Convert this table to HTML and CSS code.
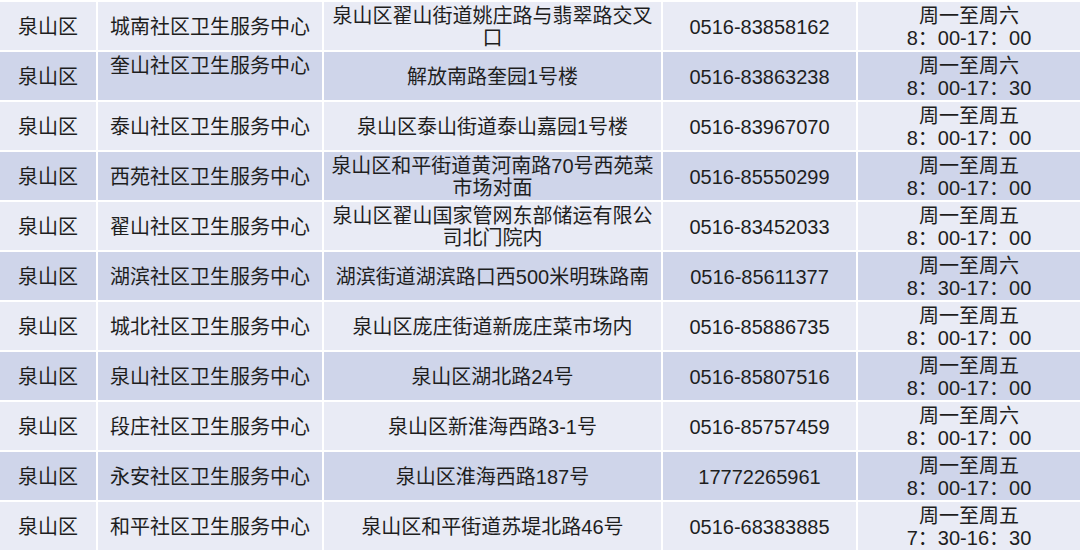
FILE: index.html
```html
<!DOCTYPE html>
<html lang="zh-CN">
<head>
<meta charset="utf-8">
<title>泉山区社区卫生服务中心</title>
<link rel="stylesheet" href="styles.css">
</head>
<body>
<div class="table">
  <div class="row light">
    <div class="cell">泉山区</div>
    <div class="cell">城南社区卫生服务中心</div>
    <div class="cell">泉山区翟山街道姚庄路与翡翠路交叉口</div>
    <div class="cell">0516-83858162</div>
    <div class="cell">周一至周六<br>8：00-17：00</div>
  </div>
  <div class="row dark">
    <div class="cell">泉山区</div>
    <div class="cell top">奎山社区卫生服务中心</div>
    <div class="cell">解放南路奎园1号楼</div>
    <div class="cell">0516-83863238</div>
    <div class="cell">周一至周六<br>8：00-17：30</div>
  </div>
  <div class="row light">
    <div class="cell">泉山区</div>
    <div class="cell">泰山社区卫生服务中心</div>
    <div class="cell">泉山区泰山街道泰山嘉园1号楼</div>
    <div class="cell">0516-83967070</div>
    <div class="cell">周一至周五<br>8：00-17：00</div>
  </div>
  <div class="row dark">
    <div class="cell">泉山区</div>
    <div class="cell">西苑社区卫生服务中心</div>
    <div class="cell">泉山区和平街道黄河南路70号西苑菜市场对面</div>
    <div class="cell">0516-85550299</div>
    <div class="cell">周一至周五<br>8：00-17：00</div>
  </div>
  <div class="row light">
    <div class="cell">泉山区</div>
    <div class="cell">翟山社区卫生服务中心</div>
    <div class="cell">泉山区翟山国家管网东部储运有限公司北门院内</div>
    <div class="cell">0516-83452033</div>
    <div class="cell">周一至周五<br>8：00-17：00</div>
  </div>
  <div class="row dark">
    <div class="cell">泉山区</div>
    <div class="cell">湖滨社区卫生服务中心</div>
    <div class="cell">湖滨街道湖滨路口西500米明珠路南</div>
    <div class="cell">0516-85611377</div>
    <div class="cell">周一至周六<br>8：30-17：00</div>
  </div>
  <div class="row light">
    <div class="cell">泉山区</div>
    <div class="cell">城北社区卫生服务中心</div>
    <div class="cell">泉山区庞庄街道新庞庄菜市场内</div>
    <div class="cell">0516-85886735</div>
    <div class="cell">周一至周五<br>8：00-17：00</div>
  </div>
  <div class="row dark">
    <div class="cell">泉山区</div>
    <div class="cell">泉山社区卫生服务中心</div>
    <div class="cell">泉山区湖北路24号</div>
    <div class="cell">0516-85807516</div>
    <div class="cell">周一至周五<br>8：00-17：00</div>
  </div>
  <div class="row light">
    <div class="cell">泉山区</div>
    <div class="cell">段庄社区卫生服务中心</div>
    <div class="cell">泉山区新淮海西路3-1号</div>
    <div class="cell">0516-85757459</div>
    <div class="cell">周一至周六<br>8：00-17：00</div>
  </div>
  <div class="row dark">
    <div class="cell">泉山区</div>
    <div class="cell">永安社区卫生服务中心</div>
    <div class="cell">泉山区淮海西路187号</div>
    <div class="cell">17772265961</div>
    <div class="cell">周一至周五<br>8：00-17：00</div>
  </div>
  <div class="row light">
    <div class="cell">泉山区</div>
    <div class="cell">和平社区卫生服务中心</div>
    <div class="cell">泉山区和平街道苏堤北路46号</div>
    <div class="cell">0516-68383885</div>
    <div class="cell">周一至周五<br>7：30-16：30</div>
  </div>
</div>
</body>
</html>
```

FILE: styles.css
```css
html, body {
  margin: 0;
  padding: 0;
  background: #ffffff;
}

body {
  width: 1080px;
  height: 552px;
  overflow: hidden;
  font-family: "Liberation Sans", "Noto Sans CJK SC", sans-serif;
  font-size: 20px;
  color: #1e1e1e;
}

.table {
  display: flex;
  flex-direction: column;
  gap: 2px;
  padding-top: 2px;
}

.row {
  display: grid;
  grid-template-columns: 96px 224px 337px 193px 222px;
  column-gap: 2px;
  height: 48px;
}

.cell {
  display: flex;
  align-items: center;
  justify-content: center;
  text-align: center;
  line-height: 22px;
  padding: 2px 4px 0;
  overflow: hidden;
}

.cell.top {
  align-items: flex-start;
  padding-top: 3px;
}

.light .cell {
  background: #e9ebf5;
}

.dark .cell {
  background: #cfd5ea;
}
```
